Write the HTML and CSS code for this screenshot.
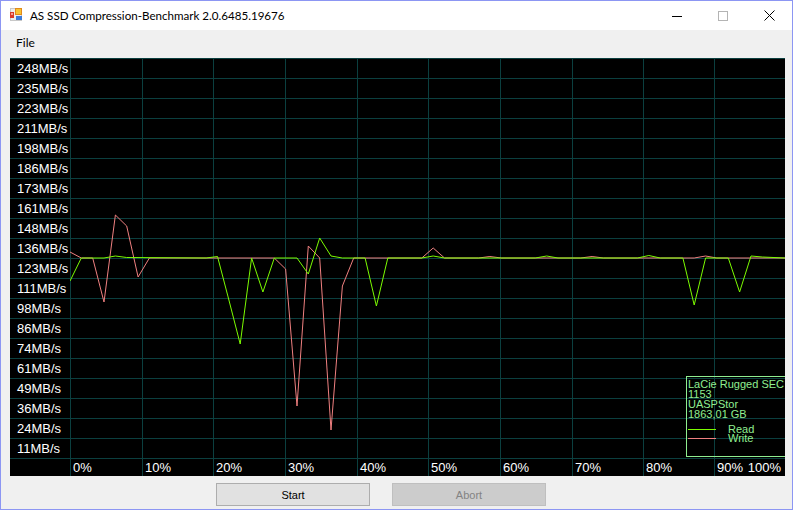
FILE: index.html
```
<!DOCTYPE html>
<html>
<head>
<meta charset="utf-8">
<title>AS SSD Compression-Benchmark</title>
<link rel="stylesheet" href="styles.css">
</head>
<body>
<div class="window">
  <div class="titlebar">
    <svg class="appicon" width="12" height="13" viewBox="0 0 12 13">
      <rect x="0.5" y="0.5" width="11" height="12" fill="#ececec" stroke="#c8c8c8"/>
      <rect x="0" y="4" width="4" height="6" fill="#d83a2a"/>
      <rect x="1" y="5" width="2" height="2" fill="#f4a090"/>
      <rect x="5" y="0" width="7" height="7" fill="#f6c232"/>
      <rect x="5.5" y="0.5" width="6" height="6" fill="none" stroke="#e08a1a"/>
      <rect x="6" y="8" width="6" height="4" fill="#3b7ad8"/>
    </svg>
    <span class="title">AS SSD Compression-Benchmark 2.0.6485.19676</span>
    <div class="controls">
      <div class="ctl"><svg width="10" height="10" viewBox="0 0 10 10"><path d="M0 5.5H10" stroke="#000" stroke-width="1"/></svg></div>
      <div class="ctl"><svg width="10" height="10" viewBox="0 0 10 10"><rect x="0.5" y="0.5" width="9" height="9" fill="none" stroke="#b4b4b4"/></svg></div>
      <div class="ctl"><svg width="11" height="11" viewBox="0 0 11 11"><path d="M0.5 0.5L10.5 10.5M10.5 0.5L0.5 10.5" stroke="#000" stroke-width="1"/></svg></div>
    </div>
  </div>
  <div class="menubar"><span class="menuitem">File</span></div>
  <div class="content">
    <div class="chart">
      <div class="yaxis">
        <div class="yl">248MB/s</div>
        <div class="yl">235MB/s</div>
        <div class="yl">223MB/s</div>
        <div class="yl">211MB/s</div>
        <div class="yl">198MB/s</div>
        <div class="yl">186MB/s</div>
        <div class="yl">173MB/s</div>
        <div class="yl">161MB/s</div>
        <div class="yl">148MB/s</div>
        <div class="yl">136MB/s</div>
        <div class="yl">123MB/s</div>
        <div class="yl">111MB/s</div>
        <div class="yl">98MB/s</div>
        <div class="yl">86MB/s</div>
        <div class="yl">74MB/s</div>
        <div class="yl">61MB/s</div>
        <div class="yl">49MB/s</div>
        <div class="yl">36MB/s</div>
        <div class="yl">24MB/s</div>
        <div class="yl">11MB/s</div>
      </div>
      <svg class="plot" width="715" height="400" viewBox="0 0 715 400">
        <path class="grid" d="M0 0.5H715M0 20.5H715M0 40.5H715M0 60.5H715M0 80.5H715M0 100.5H715M0 120.5H715M0 140.5H715M0 160.5H715M0 180.5H715M0 200.5H715M0 220.5H715M0 240.5H715M0 260.5H715M0 280.5H715M0 300.5H715M0 320.5H715M0 340.5H715M0 360.5H715M0 380.5H715M0.5 0V400M72.5 0V400M143.5 0V400M215.5 0V400M287.5 0V400M358.5 0V400M430.5 0V400M502.5 0V400M573.5 0V400M644.5 0V400"/>
        <polyline class="read" points="0,194 11.3,200 22.7,200 34,244 45.4,157 56.7,168 68.1,219 79.4,200 204.3,200 215.6,211 227,348 238.3,188 249.7,200 261,372 272.4,228 283.7,200 351.8,200 363.2,190 374.5,200 408.6,200 419.9,198.5 431.3,200 510.7,200 522.1,198.5 533.4,200 624.2,200 635.6,198 646.9,200 715,200"/>
        <polyline class="write" points="0,223 11.3,200 34,200 45.4,198 56.7,199.5 136.2,200 147.5,198.5 158.9,242 170.2,286 181.6,200 192.9,234 204.3,200 227,200 238.3,216 249.7,180 261,198 272.4,200 295.1,200 306.4,248 317.8,200 351.8,200 363.2,198 374.5,200 465.3,200 476.7,198 488,200 567.5,200 578.8,197.5 590.2,200 612.9,200 624.2,247 635.6,200 658.3,200 669.6,234 681,198 692.3,199 715,200"/>
      </svg>
      <div class="xaxis">
        <div class="xspacer"></div>
        <div class="xc w72">0%</div>
        <div class="xc w71">10%</div>
        <div class="xc w72">20%</div>
        <div class="xc w72">30%</div>
        <div class="xc w71">40%</div>
        <div class="xc w72">50%</div>
        <div class="xc w72">60%</div>
        <div class="xc w71">70%</div>
        <div class="xc w71">80%</div>
        <div class="xc w71 last"><span>90%</span><span>100%</span></div>
      </div>
      <div class="legend">
        <div class="ltext">LaCie Rugged SEC</div>
        <div class="ltext">1153</div>
        <div class="ltext">UASPStor</div>
        <div class="ltext">1863,01 GB</div>
        <div class="lrow first"><span class="lline lread"></span><span>Read</span></div>
        <div class="lrow"><span class="lline lwrite"></span><span>Write</span></div>
      </div>
    </div>
    <div class="buttons">
      <button class="btn">Start</button>
      <button class="btn disabled">Abort</button>
    </div>
  </div>
</div>
</body>
</html>
```
FILE: styles.css
```
* { box-sizing: border-box; }
html, body { margin: 0; padding: 0; }
body {
  width: 793px;
  height: 510px;
  overflow: hidden;
  background: #f0f0f0;
  font-family: "Liberation Sans", Arial, sans-serif;
}
.window {
  width: 793px;
  height: 510px;
  border: 1px solid #8c96f3;
  background: #f0f0f0;
  display: flex;
  flex-direction: column;
}
.titlebar {
  height: 29px;
  flex: none;
  background: #ffffff;
  display: flex;
  align-items: center;
  padding-left: 9px;
}
.appicon {
  display: block;
  align-self: flex-start;
  margin-top: 7px;
  flex: none;
}
.title {
  margin-left: 8px;
  font-family: Lato, "Noto Sans", sans-serif;
  font-size: 11.6px;
  color: #000;
  white-space: nowrap;
}
.controls {
  margin-left: auto;
  display: flex;
  height: 29px;
}
.ctl {
  width: 46px;
  height: 29px;
  display: flex;
  align-items: center;
  justify-content: center;
}
.ctl svg { display: block; }
.menubar {
  height: 24px;
  flex: none;
  display: flex;
  align-items: center;
  padding-left: 15px;
}
.menuitem {
  font-family: Lato, "Noto Sans", sans-serif;
  font-size: 12px;
  color: #000;
}
.content {
  padding: 4px 0 0 9px;
}
.chart {
  position: relative;
  width: 775px;
  height: 418px;
  background: #000;
  display: grid;
  grid-template-columns: 60px 715px;
  grid-template-rows: 400px 18px;
  overflow: hidden;
}
.yaxis {
  grid-column: 1;
  grid-row: 1;
}
.yl {
  height: 20px;
  border-top: 1px solid #0b3f3f;
  line-height: 19px;
  padding-left: 7px;
  color: #fff;
  font-size: 13px;
  white-space: nowrap;
}
.plot {
  grid-column: 2;
  grid-row: 1;
  display: block;
}
.grid {
  stroke: #0b3f3f;
  stroke-width: 1;
  fill: none;
  shape-rendering: crispEdges;
}
.read {
  fill: none;
  stroke: #f08080;
  stroke-width: 1;
}
.write {
  fill: none;
  stroke: #7cfc00;
  stroke-width: 1;
}
.xaxis {
  grid-column: 1 / 3;
  grid-row: 2;
  display: flex;
  border-top: 1px solid #0b3f3f;
}
.xspacer { width: 60px; flex: none; }
.xc {
  flex: none;
  border-left: 1px solid #0b3f3f;
  padding-left: 2px;
  color: #fff;
  font-size: 13px;
  line-height: 17px;
  white-space: nowrap;
}
.w72 { width: 72px; }
.w71 { width: 71px; }
.xc.last {
  display: flex;
  justify-content: space-between;
  padding-right: 4px;
}
.legend {
  position: absolute;
  left: 676px;
  top: 318px;
  width: 112px;
  height: 81px;
  border: 1px solid #90ee90;
  padding: 2px 0 0 1px;
  color: #90ee90;
  font-size: 11px;
  line-height: 10px;
}
.ltext { white-space: nowrap; height: 10px; }
.lrow {
  display: flex;
  height: 9px;
  line-height: 9px;
}
.lrow.first { margin-top: 6px; }
.lline {
  width: 28px;
  height: 1px;
  margin-top: 4px;
  margin-right: 12px;
  flex: none;
}
.lread { background: #7cfc00; }
.lwrite { background: #f08080; }
.buttons {
  display: flex;
  gap: 22px;
  padding-left: 206px;
  margin-top: 7px;
}
.btn {
  width: 154px;
  height: 23px;
  padding: 0;
  margin: 0;
  background: #e1e1e1;
  border: 1px solid #adadad;
  border-radius: 0;
  font-family: "Liberation Sans", Arial, sans-serif;
  font-size: 11px;
  color: #000;
}
.btn.disabled {
  background: #cccccc;
  border-color: #bfbfbf;
  color: #838383;
}
```
